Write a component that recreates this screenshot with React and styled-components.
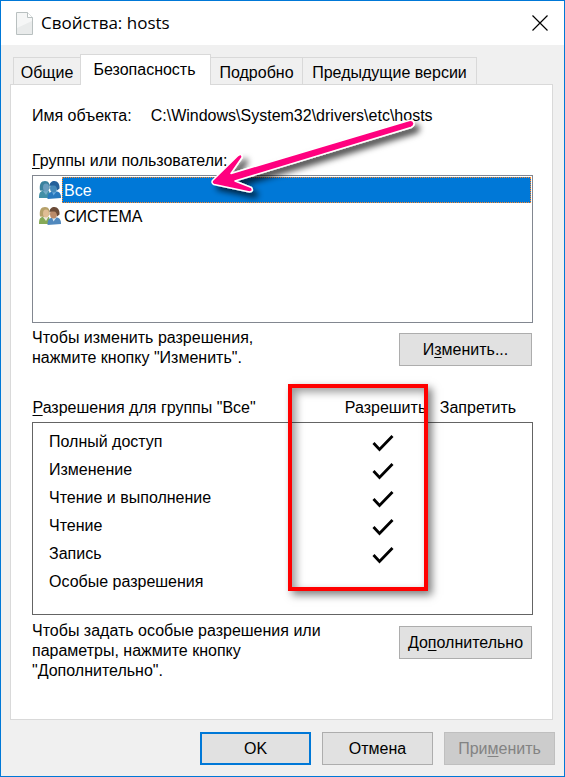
import React from 'react';
import styled, { createGlobalStyle, css } from 'styled-components';

const GlobalStyle = createGlobalStyle`
* {
    box-sizing: border-box;
}

body {
    margin: 0;
    background: #f0f0f0;
    color: #000;
    font: 16px/20px "Liberation Sans", Arial, sans-serif;
}

button {
    font: inherit;
    color: inherit;
}

u {
    text-decoration-thickness: 1px;
    text-underline-offset: 2px;
    text-decoration-skip-ink: none;
}
`

const Window = styled.div`
display: flex;
flex-direction: column;
min-height: 100vh;
border: 1px solid #0078d7;
background: #f0f0f0;
`

const TitleBar = styled.header`
display: flex;
align-items: center;
height: 44px;
padding: 0 16px 0 15px;
background: #fff;

h1 {
    flex: 1;
    margin: 0 0 0 8px;
    font: 17px/24px "Open Sans", "Noto Sans", sans-serif;
}
`

const CloseButton = styled.button`
display: flex;
padding: 0;
border: 0;
background: none;
`

const TabList = styled.div`
display: flex;
align-items: flex-end;
height: 39px;
padding-left: 12px;
`

const Tab = styled.button`
width: ${({ $width }) => $width}px;
height: 27px;
padding: 4px 0 0;
border: 1px solid #d9d9d9;
border-bottom: 0;
border-left-width: ${({ $joined }) => ($joined ? 0 : 1)}px;
border-right-width: ${({ $first }) => ($first ? 0 : 1)}px;
background: #f0f0f0;
white-space: nowrap;

${({ $active }) => $active && css`
    position: relative;
    height: 31px;
    margin: 0 0 -1px;
    padding: 0 2px 0 0;
    background: #fff;
`}
`

const Panel = styled.main`
flex: 1;
margin: 0 11px 0 9px;
padding: 21px 19px 35px 21px;
border: 1px solid #d9d9d9;
background: #fff;
`

const ObjectName = styled.dl`
display: flex;
gap: 19px;
margin: 0;

dd {
    margin: 0;
}
`

const Section = styled.section`
position: relative;
margin-top: ${({ $gap }) => $gap}px;
`

const Label = styled.div`
line-height: 20px;
`

const UserList = styled.ul`
height: 148px;
margin: 4px 0 0;
padding: 1px;
border: 1px solid #828790;
list-style: none;
`

const User = styled.li`
display: flex;
align-items: center;
padding-left: 4px;

svg {
    flex: none;
}

span {
    flex: 1;
    padding: 3px 1px 1px;
    border: 1px solid transparent;
}

${({ $selected }) => $selected && css`
    span {
        border: 1px dotted #ff8728;
        background: #0078d7;
        color: #fff;
    }
`}
`

const Hint = styled.div`
display: flex;
justify-content: space-between;
align-items: flex-start;
gap: 16px;
margin-top: ${({ $gap }) => $gap}px;
padding-right: 1px;

p {
    max-width: 300px;
    margin: 0;
}

button {
    margin-top: 5px;
}
`

const Button = styled.button`
flex: none;
width: ${({ $wide }) => ($wide ? 133 : 111)}px;
height: 33px;
padding: 0;
border: 1px solid #adadad;
background: #e1e1e1;

${({ $primary }) => $primary && css`
    border: 2px solid #0078d7;
`}

&:disabled {
    border-color: #bfbfbf;
    background: #ccc;
    color: #838383;
}
`

const Permissions = styled.table`
width: 100%;
border-collapse: collapse;

th, td {
    padding: 0;
    font-weight: normal;
    text-align: center;
}

th:first-child {
    text-align: left;
}

thead th {
    padding-bottom: 4px;
}

tbody {
    border: 1px solid #646464;
}

tbody th {
    height: 28px;
    padding-left: 16px;
}

tbody tr:first-child > * {
    height: 33px;
    padding-top: 5px;
}

tbody tr:last-child > * {
    height: 47px;
    padding-bottom: 18px;
}

td svg {
    display: block;
    margin: 2px auto 0;
}
`

const AllowHead = styled.th`
width: 92px;
`

const DenyHead = styled.th`
width: 101px;

&& {
    padding-right: 8px;
}
`

const AllowCell = styled.td`
&& {
    padding-right: 6px;
}
`

const Highlight = styled.div`
position: absolute;
top: -14px;
right: 105px;
bottom: 24px;
width: 140px;
border: 4px solid #f00;
box-shadow: 4px 4px 8px rgba(0, 0, 0, 0.5), inset 4px 4px 8px rgba(0, 0, 0, 0.4);
pointer-events: none;
`

const Pointer = styled.svg`
position: absolute;
top: -40px;
left: 172px;
pointer-events: none;
`

const Footer = styled.footer`
display: flex;
justify-content: flex-end;
gap: 11px;
padding: 12px 9px 11px;
`

const FileIcon = () => (
    <svg width="17" height="23" viewBox="0 0 17 23" aria-hidden="true">
        <path d="M.5 .5h11l5 5v17H.5z" fill="#f5f6f6" stroke="#b9c0c0" />
        <path d="M1 16L16 9v13H1z" fill="#e9ebeb" />
        <path d="M11.500 .5v5h5" fill="#fff" stroke="#b9c0c0" />
    </svg>
);

const PeopleIcon = ({ selected }) => (
    <svg width="24" height="20" viewBox="0 0 24 20" aria-hidden="true">
        <path d="M1 18c0-5 1-7 5-7.500l5 .5 2 7z" fill={selected ? '#438fa6' : '#86a957'} />
        <path d="M5 11l3 4 3-5z" fill={selected ? '#76acc7' : '#eceade'} />
        <path d="M2 10.500C1 4 3 1 7 1s5 3 4.500 8l-4 2z" fill={selected ? '#39819d' : '#b5a069'} />
        <ellipse cx="8" cy="7.500" rx="3" ry="4" fill={selected ? '#6a9dbf' : '#e0bd94'} />
        <path d="M9.500 19c0-5 1.500-7 5.500-7.500h4c3 .5 4 3 4 6.500z" fill={selected ? '#2878bd' : '#5088bd'} />
        <path d="M14 11.500l1.500 4 3-4z" fill={selected ? '#69aade' : '#d7e6f1'} />
        <ellipse cx="15.500" cy="8" rx="3.500" ry="4.500" fill={selected ? '#4589b9' : '#bb8b69'} />
        <path d="M11.500 6c0-3 2-5 5-5s5.500 3 5 7.500l-2.500 2c0-3-1-5-3-5s-3 0-4.500 .5z" fill={selected ? '#24609a' : '#6b4b37'} />
    </svg>
);

const Tick = () => (
    <svg width="22" height="18" viewBox="0 0 22 18" role="img" aria-label="Да">
        <path d="M1.500 9l6 6.500L20.500 2" fill="none" stroke="#000" strokeWidth="2.800" />
    </svg>
);

const Arrow = () => (
    <Pointer width="236" height="110" viewBox="204 110 236 110" aria-hidden="true">
        <defs>
            <filter id="shadow" x="-20%" y="-30%" width="140%" height="180%">
                <feDropShadow dx="5" dy="5" stdDeviation="3" floodColor="#000" floodOpacity="0.7" />
            </filter>
        </defs>
        <path
            d="M212.500 179.500L238 154.500Q242.500 152 242 156.500L231 172.500L409 119.500Q413 118.500 414 122Q414.500 125 411 126.500L235 180L251.500 186.500Q254 190.500 249.500 191L214 183.500Q211 182 212.500 179.500z"
            fill="#ff007f"
            stroke="#fff"
            strokeWidth="1.500"
            strokeLinejoin="round"
            filter="url(#shadow)"
        />
    </Pointer>
);

const permissions = [
    { name: 'Полный доступ', allow: true },
    { name: 'Изменение', allow: true },
    { name: 'Чтение и выполнение', allow: true },
    { name: 'Чтение', allow: true },
    { name: 'Запись', allow: true },
    { name: 'Особые разрешения', allow: false },
];

const App = () => {

    return (
        <Window>
            <GlobalStyle />

            <TitleBar>
                <FileIcon />
                <h1>Свойства: hosts</h1>
                <CloseButton type="button" aria-label="Закрыть">
                    <svg width="16" height="16" viewBox="0 0 16 16">
                        <path d="M.5 .5l15 15M15.500 .5l-15 15" stroke="#000" strokeWidth="1.200" />
                    </svg>
                </CloseButton>
            </TitleBar>

            <TabList role="tablist">
                <Tab type="button" role="tab" $width={67} $first>Общие</Tab>
                <Tab type="button" role="tab" aria-selected="true" $width={131} $active>Безопасность</Tab>
                <Tab type="button" role="tab" $width={92} $joined>Подробно</Tab>
                <Tab type="button" role="tab" $width={174} $joined>Предыдущие версии</Tab>
            </TabList>

            <Panel role="tabpanel">
                <ObjectName>
                    <dt>Имя объекта:</dt>
                    <dd>C:\Windows\System32\drivers\etc\hosts</dd>
                </ObjectName>

                <Section $gap={25}>
                    <Label id="users"><u>Г</u>руппы или пользователи:</Label>
                    <UserList role="listbox" aria-labelledby="users">
                        <User role="option" aria-selected="true" $selected>
                            <PeopleIcon selected />
                            <span>Все</span>
                        </User>
                        <User role="option" aria-selected="false">
                            <PeopleIcon />
                            <span>СИСТЕМА</span>
                        </User>
                    </UserList>
                    <Arrow />
                </Section>

                <Hint $gap={5}>
                    <p>Чтобы изменить разрешения,<br />нажмите кнопку "Изменить".</p>
                    <Button type="button" $wide>И<u>з</u>менить...</Button>
                </Hint>

                <Section $gap={30}>
                    <Permissions>
                        <thead>
                            <tr>
                                <th scope="col"><u>Р</u>азрешения для группы "Все"</th>
                                <AllowHead scope="col">Разрешить</AllowHead>
                                <DenyHead scope="col">Запретить</DenyHead>
                            </tr>
                        </thead>
                        <tbody>
                            {permissions.map(({ name, allow }) => (
                                <tr key={name}>
                                    <th scope="row">{name}</th>
                                    <AllowCell>{allow && <Tick />}</AllowCell>
                                    <td />
                                </tr>
                            ))}
                        </tbody>
                    </Permissions>
                    <Highlight />
                </Section>

                <Hint $gap={6}>
                    <p>Чтобы задать особые разрешения или параметры, нажмите кнопку "Дополнительно".</p>
                    <Button type="button" $wide>До<u>п</u>олнительно</Button>
                </Hint>
            </Panel>

            <Footer>
                <Button type="button" $primary>OK</Button>
                <Button type="button">Отмена</Button>
                <Button type="button" disabled>При<u>м</u>енить</Button>
            </Footer>
        </Window>
    );
};

export default App;
